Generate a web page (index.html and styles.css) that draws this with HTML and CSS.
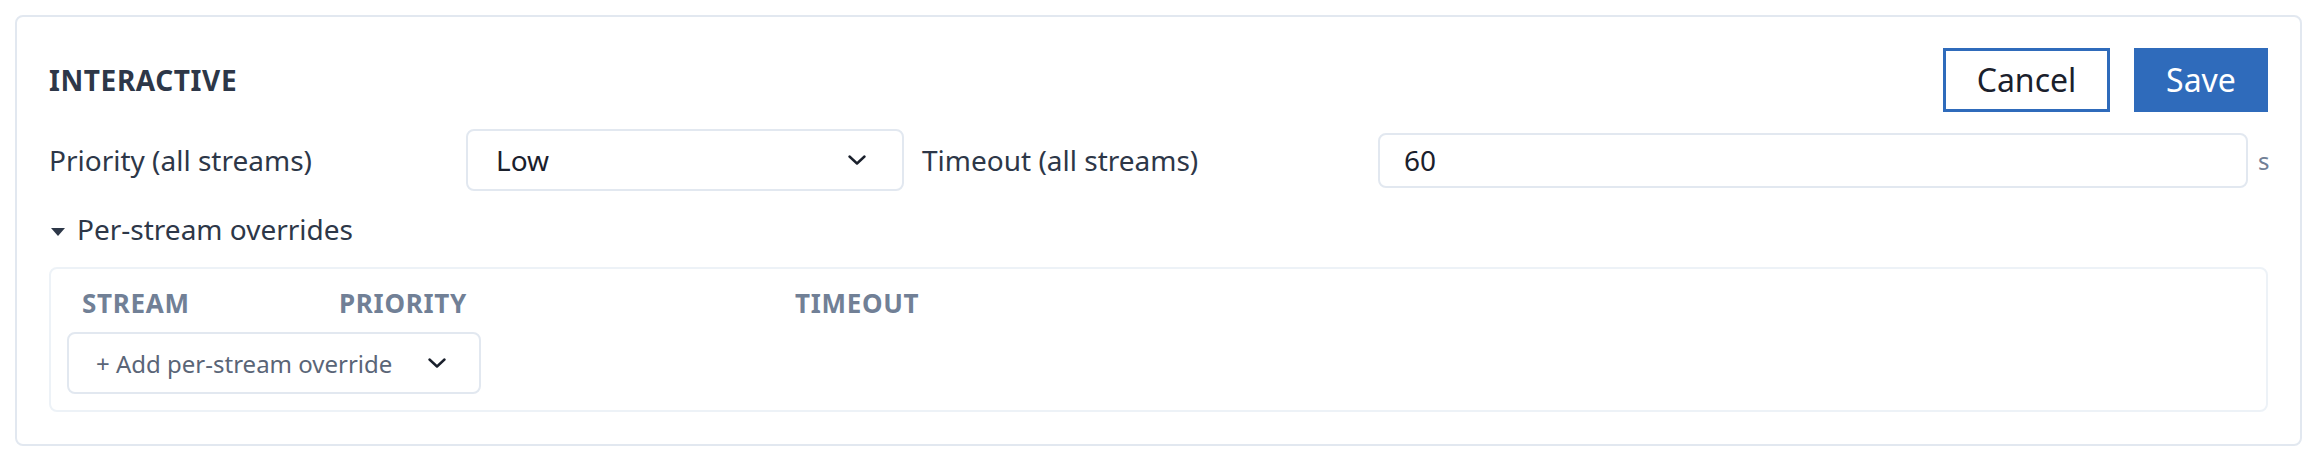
FILE: index.html
```html
<!DOCTYPE html>
<html lang="en">
<head>
<meta charset="utf-8">
<title>Interactive</title>
<link rel="stylesheet" href="styles.css">
</head>
<body>
<section class="card">
  <div class="card-head">
    <h2 class="title">INTERACTIVE</h2>
    <div class="actions">
      <button class="btn btn-outline">Cancel</button>
      <button class="btn btn-primary">Save</button>
    </div>
  </div>

  <div class="field-row">
    <label class="field-label label-priority">Priority (all streams)</label>
    <div class="select select-priority">
      <span class="select-value">Low</span>
      <svg class="chevron" viewBox="0 0 18 10" width="18" height="10"><path d="M1.5 1.5 L9 8.5 L16.5 1.5"/></svg>
    </div>
    <label class="field-label label-timeout">Timeout (all streams)</label>
    <div class="input"><span class="input-value">60</span></div>
    <span class="unit">s</span>
  </div>

  <div class="toggle">
    <svg class="caret" viewBox="0 0 14 8" width="14" height="8"><polygon points="0,0 14,0 7,8"/></svg>
    <span>Per-stream overrides</span>
  </div>

  <div class="overrides">
    <div class="thead">
      <span class="th th-stream">STREAM</span>
      <span class="th th-priority">PRIORITY</span>
      <span class="th th-timeout">TIMEOUT</span>
    </div>
    <div class="select select-add">
      <span class="add-value">+ Add per-stream override</span>
      <svg class="chevron" viewBox="0 0 18 10" width="18" height="10"><path d="M1.5 1.5 L9 8.5 L16.5 1.5"/></svg>
    </div>
  </div>
</section>
</body>
</html>
```

FILE: styles.css
```css
* {
  box-sizing: border-box;
}

html, body {
  background: #ffffff;
}

body {
  margin: 15px 18px 0 15px;
  font-family: "Noto Sans", "Open Sans", sans-serif;
  color: #2d3748;
  font-size: 28px;
}

.card {
  border: 2px solid #e2e8f0;
  border-radius: 8px;
  padding: 31px 32px 32px 32px;
  background: #fff;
}

.card-head {
  display: flex;
  align-items: center;
  justify-content: space-between;
  height: 64px;
  margin-bottom: 17px;
}

.title {
  margin: 0;
  font-size: 28px;
  font-weight: 700;
  letter-spacing: 0.6px;
  color: #2d3748;
  line-height: 38px;
}

.actions {
  display: flex;
  gap: 24px;
}

.btn {
  font-family: "Noto Sans", "Open Sans", sans-serif;
  font-size: 32px;
  height: 64px;
  border-radius: 0;
  cursor: pointer;
  line-height: 1;
}

.btn-outline {
  width: 167px;
  background: #fff;
  border: 3px solid #2f6bbb;
  color: #1a202c;
}

.btn-primary {
  width: 134px;
  background: #2f6bbb;
  border: 3px solid #2f6bbb;
  color: #ffffff;
}

.field-row {
  display: flex;
  align-items: center;
  height: 62px;
}

.field-label {
  line-height: 40px;
  color: #2d3748;
}

.label-priority {
  width: 417px;
}

.label-timeout {
  width: 456px;
  margin-left: 18px;
}

.select {
  display: flex;
  align-items: center;
  justify-content: space-between;
  border: 2px solid #e2e8f0;
  border-radius: 8px;
  background: #fff;
}

.select-priority {
  width: 438px;
  height: 62px;
  padding: 0 36px 0 28px;
}

.select-value {
  color: #1a202c;
}

.chevron {
  display: block;
  flex: none;
}

.chevron path {
  fill: none;
  stroke: #1a202c;
  stroke-width: 2.4;
  stroke-linecap: round;
  stroke-linejoin: round;
}

.input {
  flex: 1;
  height: 55px;
  border: 2px solid #e2e8f0;
  border-radius: 8px;
  padding: 0 24px;
  display: flex;
  align-items: center;
}

.input-value {
  color: #1a202c;
}

.unit {
  margin-left: 10px;
  width: 10px;
  color: #718096;
  font-size: 24px;
}

.toggle {
  display: flex;
  align-items: center;
  gap: 12px;
  margin-top: 18px;
  height: 40px;
  padding-left: 2px;
}

.caret {
  display: block;
  margin-top: 6px;
}

.caret polygon {
  fill: #2d3748;
}

.overrides {
  margin-top: 18px;
  border: 2px solid #edf2f7;
  border-radius: 8px;
  padding: 16px;
}

.thead {
  display: flex;
  height: 47px;
  padding-bottom: 10px;
  align-items: center;
}

.th {
  padding-left: 15px;
  font-size: 26px;
  font-weight: 700;
  letter-spacing: 0.7px;
  color: #718096;
  line-height: 37px;
}

.th-stream {
  width: 257px;
}

.th-priority {
  width: 456px;
}

.select-add {
  width: 414px;
  height: 62px;
  padding: 0 33px 0 27px;
}

.add-value {
  font-size: 24px;
  color: #5a6577;
}
```
